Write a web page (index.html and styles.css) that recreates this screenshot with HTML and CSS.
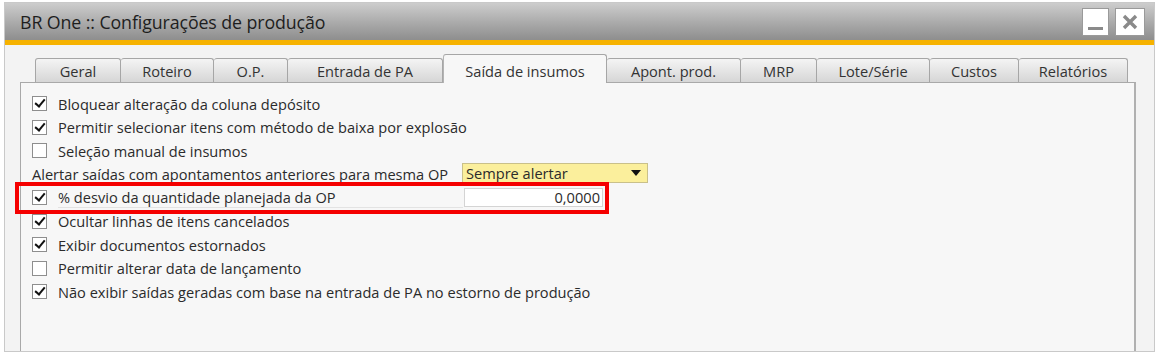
FILE: index.html
```html
<!DOCTYPE html>
<html lang="pt-br">
<head>
  <meta charset="utf-8">
  <title>BR One :: Configurações de produção</title>
  <link rel="stylesheet" href="styles.css">
</head>
<body>
  <div class="window">
    <div class="titlebar">
      <span class="title">BR One :: Configurações de produção</span>
      <div class="win-buttons">
        <span class="win-btn">
          <svg width="25" height="26" viewBox="0 0 25 26"><rect x="5" y="18" width="15" height="3" fill="#8a8a8a"/></svg>
        </span>
        <span class="win-btn">
          <svg width="28" height="26" viewBox="0 0 28 26"><path d="M8 7 L20 19 M20 7 L8 19" stroke="#8a8a8a" stroke-width="3.4"/></svg>
        </span>
      </div>
    </div>
    <div class="accent"></div>

    <div class="content">
      <div class="tabs">
        <span class="tab tab-geral">Geral</span>
        <span class="tab tab-roteiro">Roteiro</span>
        <span class="tab tab-op">O.P.</span>
        <span class="tab tab-entrada">Entrada de PA</span>
        <span class="tab tab-saida active">Saída de insumos</span>
        <span class="tab tab-apont">Apont. prod.</span>
        <span class="tab tab-mrp">MRP</span>
        <span class="tab tab-lote">Lote/Série</span>
        <span class="tab tab-custos">Custos</span>
        <span class="tab tab-relat">Relatórios</span>
      </div>

      <div class="panel">
        <div class="row"><span class="check on"></span><label>Bloquear alteração da coluna depósito</label></div>
        <div class="row"><span class="check on"></span><label>Permitir selecionar itens com método de baixa por explosão</label></div>
        <div class="row"><span class="check"></span><label>Seleção manual de insumos</label></div>
        <div class="row">
          <label class="field-label">Alertar saídas com apontamentos anteriores para mesma OP</label>
          <span class="select">Sempre alertar<span class="arrow"></span></span>
        </div>
        <div class="row highlight">
          <span class="check on"></span>
          <label class="field-label short">% desvio da quantidade planejada da OP</label>
          <span class="input">0,0000</span>
        </div>
        <div class="row"><span class="check on"></span><label>Ocultar linhas de itens cancelados</label></div>
        <div class="row"><span class="check on"></span><label>Exibir documentos estornados</label></div>
        <div class="row"><span class="check"></span><label>Permitir alterar data de lançamento</label></div>
        <div class="row"><span class="check on"></span><label>Não exibir saídas geradas com base na entrada de PA no estorno de produção</label></div>
      </div>
    </div>
  </div>
</body>
</html>
```

FILE: styles.css
```css
*, *::before, *::after {
  box-sizing: border-box;
}

body {
  margin: 0;
  padding: 2px 0 0 4px;
  background-color: #fff;
  font-family: "Open Sans", "Noto Sans", sans-serif;
  color: #2b2b2b;
}

.window {
  width: 1151px;
  height: 350px;
  border: 1px solid #c9c9c9;
  background-color: #f3f3f3;
  overflow: hidden;
}

.titlebar {
  height: 37px;
  display: flex;
  align-items: center;
  justify-content: space-between;
  padding: 0 9px 0 15px;
  background: linear-gradient(#cdcdcd, #a9a9a9 55%, #8e8e8e);
}

.title {
  font-size: 17.8px;
  color: #1e1e1e;
  letter-spacing: -0.1px;
}

.win-buttons {
  display: flex;
  gap: 6px;
}

.win-btn {
  display: flex;
  background-color: #fff;
  border: 1px solid #9a9a9a;
}

.accent {
  height: 5px;
  background-color: #f6b200;
}

.content {
  padding: 9px 18px 0 15px;
}

.tabs {
  display: flex;
  align-items: flex-end;
  height: 28px;
  padding-left: 15px;
}

.tab {
  height: 24px;
  display: flex;
  align-items: center;
  justify-content: center;
  font-size: 14.6px;
  color: #333;
  background: linear-gradient(#f4f4f4, #e2e2e2 60%, #d6d6d6);
  border: 1px solid #a6a6a6;
  border-bottom: none;
  border-left: none;
  border-radius: 3px 3px 0 0;
}

.tab:first-child {
  border-left: 1px solid #a6a6a6;
}

.tab-geral { width: 86px; }
.tab-roteiro { width: 93px; }
.tab-op { width: 74px; }
.tab-entrada { width: 155px; }
.tab-saida { width: 164px; }
.tab-apont { width: 134px; }
.tab-mrp { width: 76px; }
.tab-lote { width: 113px; }
.tab-custos { width: 89px; }
.tab-relat { width: 109px; }

.tab.active {
  height: 29px;
  padding-top: 4px;
  background: #f7f7f7;
  border-left: 1px solid #b4b4b4;
  margin-bottom: -1px;
  position: relative;
  z-index: 1;
}

.panel {
  height: 300px;
  background-color: #f7f7f7;
  border: 1px solid #a9a9a9;
  border-right: 2px solid #b0b0b0;
  padding: 9px 0 0 11px;
}

.row {
  height: 23.5px;
  display: flex;
  align-items: center;
  font-size: 14.6px;
  white-space: nowrap;
}

.check {
  width: 15px;
  height: 15px;
  border: 1px solid #8e8e8e;
  background-color: #fff;
  margin-right: 11px;
  flex: none;
  position: relative;
}

.check.on::after {
  content: "";
  position: absolute;
  left: 4px;
  top: 0;
  width: 6px;
  height: 10px;
  border: solid #111;
  border-width: 0 2px 2px 0;
  transform: rotate(40deg);
}

.field-label {
  width: 430px;
  flex: none;
}

.field-label.short {
  width: 405px;
  border-bottom: 1px solid #e3e3e3;
}

.select {
  width: 186px;
  height: 20px;
  background-color: #fbef9c;
  border: 1px solid #c9c08a;
  padding-left: 3px;
  display: flex;
  align-items: center;
  justify-content: space-between;
  position: relative;
  top: -1px;
}

.arrow {
  width: 0;
  height: 0;
  border-left: 5px solid transparent;
  border-right: 5px solid transparent;
  border-top: 6px solid #111;
  margin-right: 6px;
}

.input {
  width: 139px;
  height: 19px;
  margin-left: 1px;
  background-color: #fff;
  border: 1px solid #d4d4d4;
  text-align: right;
  padding-right: 2px;
  line-height: 17px;
}

.highlight {
  position: relative;
}

.highlight::after {
  content: "";
  position: absolute;
  left: -17px;
  top: -4px;
  width: 594px;
  height: 32px;
  border: 4px solid #f50000;
}
```
